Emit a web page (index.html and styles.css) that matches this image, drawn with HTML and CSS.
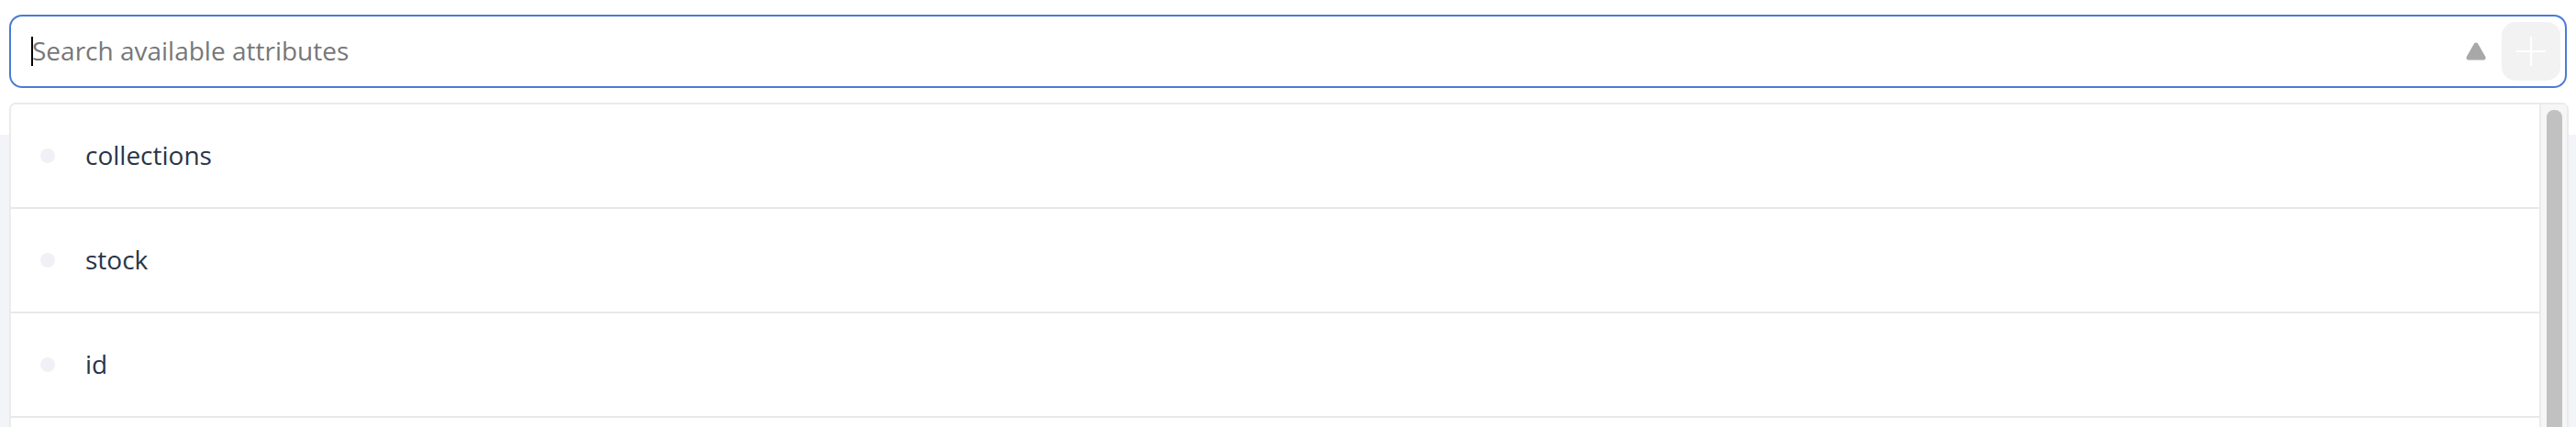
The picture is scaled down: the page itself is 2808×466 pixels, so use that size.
FILE: index.html
```html
<!DOCTYPE html>
<html lang="en">
<head>
<meta charset="utf-8">
<title>Attributes</title>
<link rel="stylesheet" href="styles.css">
</head>
<body>
<div class="top">
  <div class="search">
    <div class="field"><span class="caret"></span><span class="placeholder">Search available attributes</span></div>
    <svg class="tri" width="24" height="22" viewBox="0 0 24 22"><path d="M12 4 L20 18 L4 18 Z" fill="#a8a8a8" stroke="#a8a8a8" stroke-width="5" stroke-linejoin="round"/></svg>
    <div class="add"><svg width="34" height="34" viewBox="0 0 34 34"><path d="M17 1V33M1 17H33" stroke="#fff" stroke-width="2"/></svg></div>
  </div>
  <div class="dropdown">
    <ul class="list">
      <li class="row"><span class="dot"></span><span class="name">collections</span></li>
      <li class="row"><span class="dot"></span><span class="name">stock</span></li>
      <li class="row"><span class="dot"></span><span class="name">id</span></li>
    </ul>
    <div class="scrollbar"><div class="thumb"></div></div>
  </div>
</div>
<div class="page"></div>
</body>
</html>
```
FILE: styles.css
```css
* { box-sizing: border-box; }
html, body { margin: 0; padding: 0; }
html { height: 466px; overflow: hidden; }
body {
  background: #fff;
  font-family: "Open Sans", "Noto Sans", sans-serif;
  height: 466px;
  overflow: hidden;
}
.top {
  position: relative;
  padding: 16px 10px 0;
  height: 147px;
}
.search {
  height: 80px;
  border: 2px solid #4a7bd7;
  border-radius: 14px;
  display: flex;
  align-items: center;
  padding: 0 5px 0 22px;
  background: #fff;
}
.field {
  flex: 1;
  display: flex;
  align-items: center;
  font-size: 28px;
  color: #777;
}
.placeholder { padding-bottom: 3px; }
.caret {
  width: 2px;
  height: 32px;
  background: #000;
  margin-right: -1px;
}
.tri { margin-right: 16px; }
.add {
  width: 64px;
  height: 64px;
  border-radius: 15px;
  background: #f2f2f2;
  display: flex;
  align-items: center;
  justify-content: center;
}
.dropdown {
  position: absolute;
  top: 112px;
  left: 10px;
  right: 8px;
  height: 354px;
  border: 2px solid #ebebeb;
  border-bottom: 0;
  border-radius: 7px 7px 0 0;
  background: #fff;
  display: flex;
  z-index: 2;
}
.list {
  list-style: none;
  margin: 0;
  padding: 0;
  flex: 1;
}
.row {
  height: 114px;
  border-bottom: 2px solid #e8e8e8;
  display: flex;
  align-items: center;
  padding-left: 32px;
}
.dot {
  width: 16px;
  height: 16px;
  border-radius: 50%;
  background: #eff1f6;
  margin-right: 33px;
}
.name {
  font-size: 28px;
  color: #2a3547;
  padding-bottom: 3px;
}
.scrollbar {
  width: 30px;
  border-left: 2px solid #ebebeb;
  background: #f6f6f6;
  padding: 6px 5px 0 6px;
}
.thumb {
  height: 100%;
  border-radius: 8px 8px 0 0;
  background: #c1c1c1;
}
.page {
  height: 319px;
  background: #f3f4f8;
}
```
